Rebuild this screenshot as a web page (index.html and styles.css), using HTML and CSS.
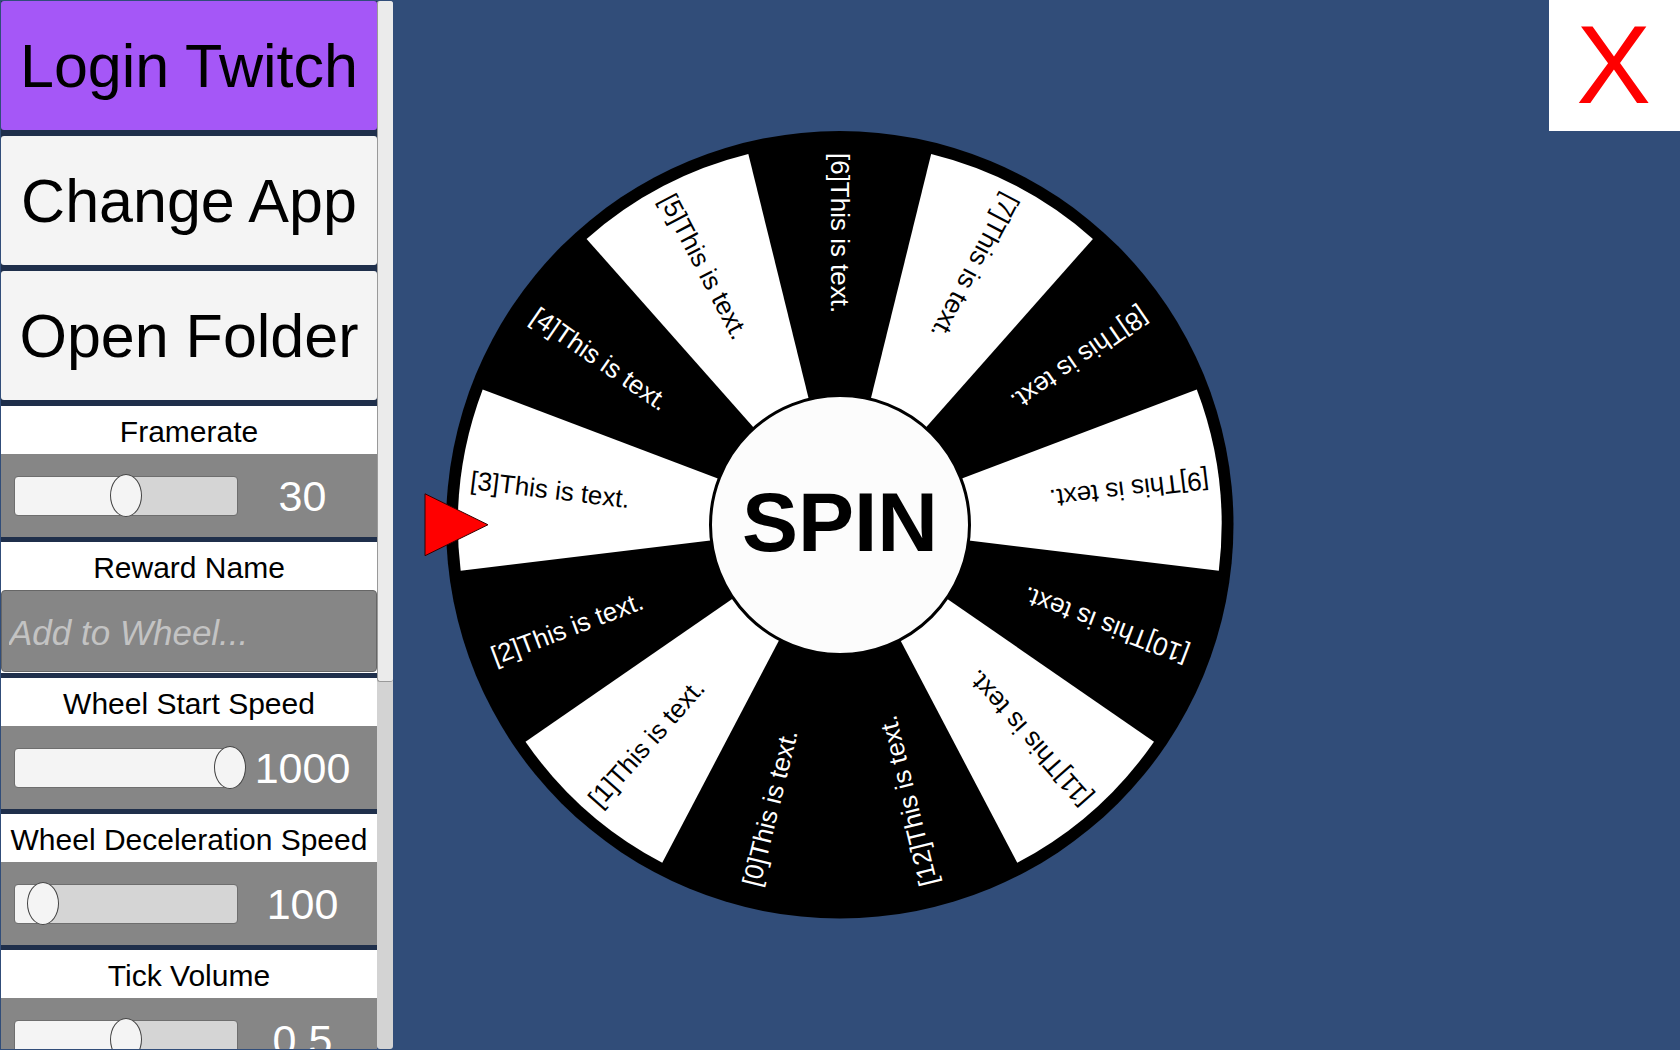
FILE: index.html
```html
<!DOCTYPE html>
<html lang="en">
<head>
<meta charset="utf-8">
<title>Spin Wheel</title>
<link rel="stylesheet" href="styles.css">
</head>
<body>
<div class="app">
  <aside class="sidebar">
    <div class="panel">
      <div class="actions">
        <button class="action action-twitch" type="button">Login Twitch</button>
        <button class="action" type="button">Change App</button>
        <button class="action" type="button">Open Folder</button>
      </div>
      <div class="settings">
        <section class="setting">
          <label class="setting-label" for="framerate">Framerate</label>
          <div class="setting-body">
            <div class="slider" style="--fill: 50%"><input id="framerate" type="range" min="0" max="60" value="30"></div>
            <output class="value" for="framerate">30</output>
          </div>
        </section>
        <section class="setting">
          <label class="setting-label" for="reward">Reward Name</label>
          <input class="text-field" id="reward" type="text" placeholder="Add to Wheel...">
        </section>
        <section class="setting">
          <label class="setting-label" for="start-speed">Wheel Start Speed</label>
          <div class="setting-body">
            <div class="slider" style="--fill: 100%"><input id="start-speed" type="range" min="0" max="1000" value="1000"></div>
            <output class="value" for="start-speed">1000</output>
          </div>
        </section>
        <section class="setting">
          <label class="setting-label" for="deceleration">Wheel Deceleration Speed</label>
          <div class="setting-body">
            <div class="slider" style="--fill: 10%"><input id="deceleration" type="range" min="0" max="1000" value="100"></div>
            <output class="value" for="deceleration">100</output>
          </div>
        </section>
        <section class="setting">
          <label class="setting-label" for="volume">Tick Volume</label>
          <div class="setting-body">
            <div class="slider" style="--fill: 50%"><input id="volume" type="range" min="0" max="1" step="0.1" value="0.5"></div>
            <output class="value" for="volume">0.5</output>
          </div>
        </section>
      </div>
    </div>
    <div class="scrollbar"><div class="scrollbar-thumb"></div></div>
  </aside>

  <main class="stage">
    <div class="wheel">
      <svg class="wheel-face" viewBox="-394 -394 788 788">
        <defs>
          <path id="wedge" d="M0 0L-371 -91.4A382 382 0 0 0 -371 91.4Z"/>
        </defs>
        <circle r="394"/>
        <g class="wedges">
          <use href="#wedge" transform="rotate(-48.46)"/>
          <use href="#wedge" transform="rotate(6.92)"/>
          <use href="#wedge" transform="rotate(62.31)"/>
          <use href="#wedge" transform="rotate(117.69)"/>
          <use href="#wedge" transform="rotate(173.08)"/>
          <use href="#wedge" transform="rotate(228.46)"/>
        </g>
        <g class="labels">
          <text class="on-black" x="-372" y="9" transform="rotate(-76.15)">[0]This is text.</text>
          <text x="-372" y="9" transform="rotate(-48.46)">[1]This is text.</text>
          <text class="on-black" x="-372" y="9" transform="rotate(-20.77)">[2]This is text.</text>
          <text x="-372" y="9" transform="rotate(6.92)">[3]This is text.</text>
          <text class="on-black" x="-372" y="9" transform="rotate(34.62)">[4]This is text.</text>
          <text x="-372" y="9" transform="rotate(62.31)">[5]This is text.</text>
          <text class="on-black" x="-372" y="9" transform="rotate(90)">[6]This is text.</text>
          <text x="-372" y="9" transform="rotate(117.69)">[7]This is text.</text>
          <text class="on-black" x="-372" y="9" transform="rotate(145.38)">[8]This is text.</text>
          <text x="-372" y="9" transform="rotate(173.08)">[9]This is text.</text>
          <text class="on-black" x="-372" y="9" transform="rotate(200.77)">[10]This is text.</text>
          <text x="-372" y="9" transform="rotate(228.46)">[11]This is text.</text>
          <text class="on-black" x="-372" y="9" transform="rotate(256.15)">[12]This is text.</text>
        </g>
        <path class="pointer" d="M-415 -31L-352 0L-415 31Z"/>
      </svg>
      <button class="spin" type="button">SPIN</button>
    </div>
  </main>

  <div class="corner">
    <button class="close" type="button">X</button>
  </div>
</div>
</body>
</html>
```
FILE: styles.css
```css
* {
  box-sizing: border-box;
}

body {
  margin: 0;
  background: #314d79;
  font-family: "Liberation Sans", Arial, sans-serif;
  color: #000;
}

button,
input {
  font-family: inherit;
  color: inherit;
}

.app {
  display: grid;
  grid-template-columns: 393px 1fr 393px;
  height: 100vh;
  overflow: hidden;
}

/* Sidebar */

.sidebar {
  display: flex;
  min-height: 0;
  padding: 1px 0 1px 1px;
}

.panel {
  flex: 1;
  overflow: hidden;
  background: #1f2f4b;
}

.actions {
  display: grid;
  gap: 6px;
  margin-bottom: 6px;
}

.action {
  height: 129px;
  padding: 0;
  border: 0;
  border-radius: 3px;
  background: #f4f4f4;
  font-size: 61px;
  line-height: 72px;
  white-space: nowrap;
}

.action-twitch {
  background: #a557f7;
}

.settings {
  display: grid;
  gap: 5px;
}

.setting {
  display: flex;
  flex-direction: column;
  background: #fff;
}

.setting-label {
  height: 48px;
  padding-top: 3px;
  font-size: 30px;
  line-height: 46px;
  text-align: center;
  white-space: nowrap;
}

.setting-body {
  display: flex;
  align-items: center;
  height: 83px;
  padding: 0 10px 0 13px;
  background: #868686;
}

.slider {
  flex: 1;
  display: flex;
  align-items: center;
  height: 40px;
  border: 1px solid #6e6e6e;
  border-radius: 4px;
  background: linear-gradient(to right, #f4f4f4 var(--fill), #d5d5d5 var(--fill));
}

.slider input {
  appearance: none;
  flex: none;
  width: calc(100% + 18px);
  height: 43px;
  margin: 0 -9px;
  background: transparent;
}

.slider input::-webkit-slider-thumb {
  appearance: none;
  width: 32px;
  height: 43px;
  border: 1px solid #444;
  border-radius: 50%;
  background: #f4f4f4;
}

.value {
  width: 129px;
  font-size: 43px;
  line-height: 48px;
  text-align: center;
  color: #fff;
}

.text-field {
  width: 100%;
  height: 82px;
  margin-bottom: 1px;
  padding: 4px 7px 0;
  border: 1px solid #666;
  border-radius: 4px;
  background: #868686;
  font-size: 35px;
}

.text-field::placeholder {
  color: #c3c3c3;
  font-style: italic;
}

.scrollbar {
  width: 16px;
  border-radius: 3px;
  background: #d3d3d3;
}

.scrollbar-thumb {
  height: 65%;
  border: 1px solid #999;
  border-width: 0 0 1px 1px;
  border-radius: 3px;
  background: #ebebeb;
}

/* Wheel */

.stage {
  display: grid;
  place-items: center;
}

.wheel {
  display: grid;
  place-items: center;
  position: relative;
  width: 75vh;
}

.wheel-face {
  display: block;
  width: 100%;
  overflow: visible;
}

.wedges {
  fill: #fff;
}

.labels {
  font-size: 26px;
}

.on-black {
  fill: #fff;
}

.pointer {
  fill: #f00;
  stroke: #300;
}

.spin {
  position: absolute;
  width: 33.3%;
  aspect-ratio: 1;
  padding: 0 0 4px;
  border: 3px solid #000;
  border-radius: 50%;
  background: #fcfcfc;
  font-size: 84px;
  font-weight: bold;
}

/* Close */

.corner {
  display: flex;
  justify-content: flex-end;
  align-items: flex-start;
}

.close {
  width: 131px;
  height: 131px;
  padding: 0 2px 2px 0;
  border: 0;
  background: #fff;
  font-size: 112px;
  line-height: 128px;
  color: #f00;
}
```
